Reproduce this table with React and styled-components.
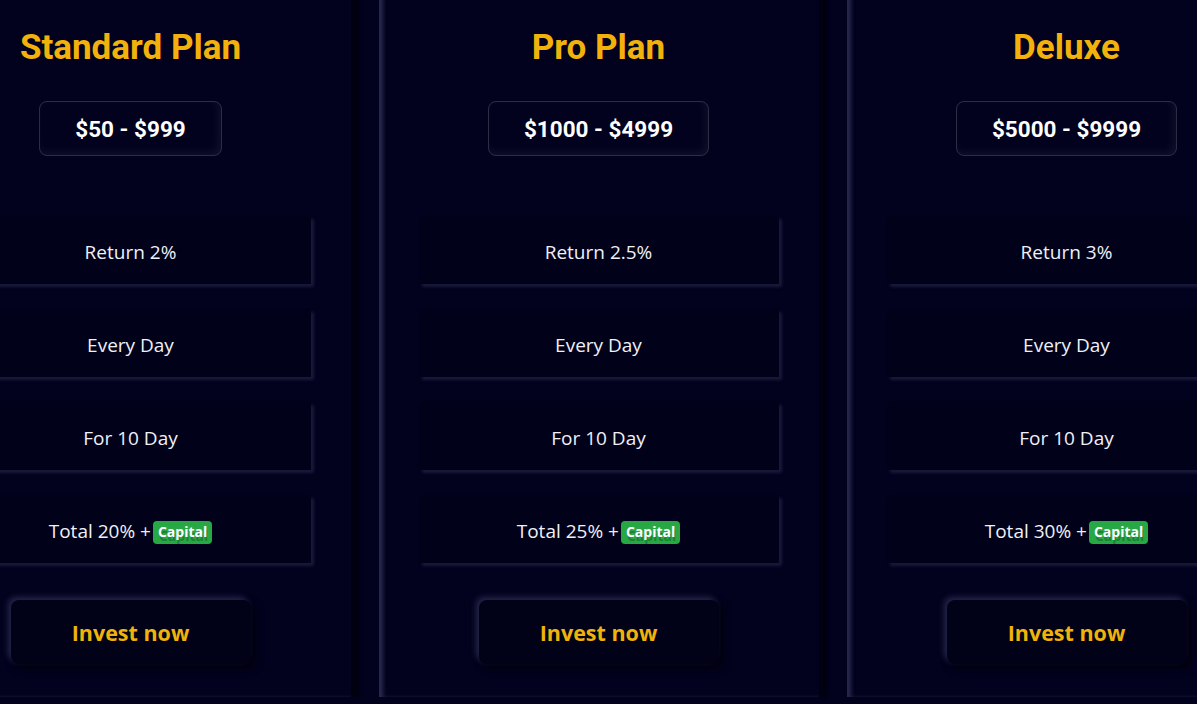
import styled, { createGlobalStyle } from "styled-components";

const GlobalStyle = createGlobalStyle`
  * {
    box-sizing: border-box;
  }
  body {
    margin: 0;
    background: #02021e;
    overflow: hidden;
    font-family: "Open Sans", "Noto Sans", sans-serif;
  }
`;

// cards run past the top edge of the view, the row is clipped
const Section = styled.section`
  height: 704px;
  display: flex;
  justify-content: center;
  align-items: flex-start;
  gap: 28px;
  overflow: hidden;
  background: #02021e;
`;

const Card = styled.div`
  flex: 0 0 440px;
  height: 757px;
  margin-top: -60px;
  display: flex;
  flex-direction: column;
  align-items: center;
  padding-top: 87px;
  background: #02021e;
  box-shadow: 9px 0 2px rgba(0, 0, 8, 0.55),
    inset 5px 0 4px -1px rgba(110, 110, 170, 0.36);
`;

const Title = styled.h2`
  margin: 0;
  font-family: Roboto, "Noto Sans", sans-serif;
  font-size: 35px;
  line-height: 42px;
  font-weight: 700;
  color: #f2b20b;
`;

const PriceBox = styled.div`
  margin-top: 32px;
  height: 55px;
  padding: 0 35px;
  display: flex;
  align-items: center;
  border: 1px solid rgba(255, 255, 255, 0.17);
  border-radius: 8px;
  box-shadow: inset -3px -3px 8px rgba(255, 255, 255, 0.06);
  font-family: Roboto, "Noto Sans", sans-serif;
  font-size: 22.5px;
  font-weight: 700;
  color: #ffffff;
`;

const Features = styled.ul`
  list-style: none;
  margin: 60px 0 0;
  padding: 0;
  display: flex;
  flex-direction: column;
  gap: 25px;
`;

const Feature = styled.li`
  width: 360px;
  height: 68px;
  padding-top: 3px;
  display: flex;
  align-items: center;
  justify-content: center;
  background: #010119;
  box-shadow: 3px 3px 3px rgba(60, 60, 100, 0.4);
  font-size: 19px;
  color: #f0f0f8;
`;

const Badge = styled.span`
  margin-left: 2px;
  padding: 2px 5px 3px;
  border-radius: 4px;
  background: #28a745;
  color: #ffffff;
  font-size: 14px;
  font-weight: 700;
  line-height: 18px;
  position: relative;
  top: 2px;
  text-shadow: 1px 4px 0 rgba(0, 60, 20, 0.35);
`;

const InvestButton = styled.button`
  margin-top: 37px;
  width: 240px;
  height: 64px;
  border: none;
  border-radius: 8px;
  background: #010118;
  box-shadow: -3px -3px 6px rgba(110, 110, 160, 0.35),
    4px 4px 8px rgba(0, 0, 0, 0.6);
  font-family: "Open Sans", "Noto Sans", sans-serif;
  font-size: 21.5px;
  font-weight: 700;
  color: #f0b30a;
  cursor: pointer;
`;

const plans = [
  { name: "Standard Plan", range: "$50 - $999", ret: "2%", total: "20%" },
  { name: "Pro Plan", range: "$1000 - $4999", ret: "2.5%", total: "25%" },
  { name: "Deluxe", range: "$5000 - $9999", ret: "3%", total: "30%" },
];

const App = () => {
  return (
    <>
      <GlobalStyle />
      <Section>
        {plans.map((plan) => (
          <Card key={plan.name}>
            <Title>{plan.name}</Title>
            <PriceBox>{plan.range}</PriceBox>
            <Features>
              <Feature>Return {plan.ret}</Feature>
              <Feature>Every Day</Feature>
              <Feature>For 10 Day</Feature>
              <Feature>
                Total {plan.total} +<Badge>Capital</Badge>
              </Feature>
            </Features>
            <InvestButton>Invest now</InvestButton>
          </Card>
        ))}
      </Section>
    </>
  );
};

export default App;
